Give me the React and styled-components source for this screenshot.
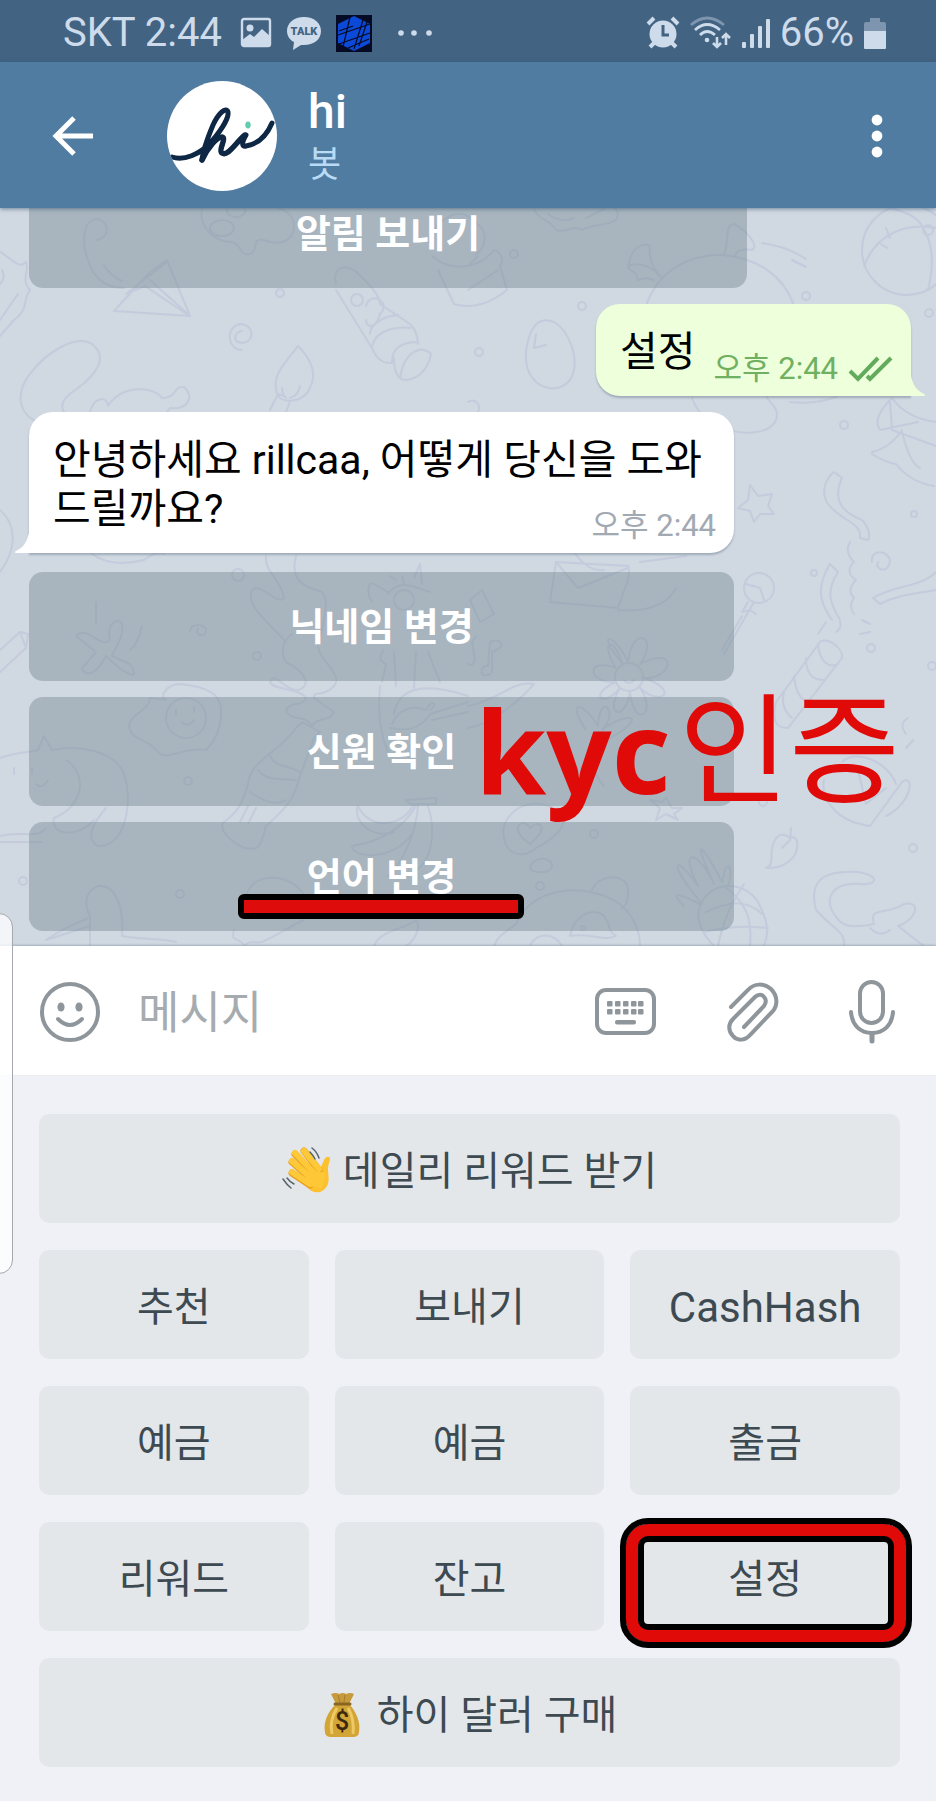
import React from 'react';
import styled, { createGlobalStyle } from 'styled-components';

const GlobalStyle = createGlobalStyle`
    * {
        box-sizing: border-box;
    }
    body {
        margin: 0;
        font-family: Roboto, "Noto Sans CJK KR", sans-serif;
    }
    button, input {
        font-family: inherit;
        border: none;
        padding: 0;
        background: none;
    }
    button {
        cursor: pointer;
    }
    svg {
        display: block;
        flex-shrink: 0;
    }
`;

const Page = styled.div`
    position: relative;
    height: 100vh;
    display: flex;
    flex-direction: column;
    overflow: hidden;
    background-color: #eff1f6;
`;

const StatusBar = styled.div`
    height: 62px;
    padding: 4px 50px 0 63px;
    display: flex;
    align-items: center;
    justify-content: space-between;
    flex-shrink: 0;
    background-color: #426382;
    color: #cddbeb;
    font-size: 40px;
    line-height: 46px;
`;

const StatusGroup = styled.div`
    display: flex;
    align-items: center;
    gap: ${props => props.$gap}px;
`;

const Header = styled.header`
    position: relative;
    z-index: 2;
    height: 146px;
    padding: 1px 48px 0 50px;
    display: flex;
    align-items: center;
    flex-shrink: 0;
    background-color: #507ca2;
    box-shadow: 0 1px 4px rgba(50, 80, 110, 0.6);
`;

const Avatar = styled.div`
    width: 110px;
    height: 110px;
    margin: 0 31px 0 73px;
    border-radius: 50%;
    overflow: hidden;
    flex-shrink: 0;
    background-color: white;
`;

const Peer = styled.div`
    flex: 1;
`;

const Name = styled.h1`
    margin: 0;
    color: white;
    font-size: 48px;
    font-weight: 500;
    line-height: 58px;
`;

const Status = styled.p`
    margin: 0;
    color: #b9dbf5;
    font-size: 36px;
    line-height: 48px;
`;

const Chat = styled.main`
    position: relative;
    flex: 1;
    min-height: 0;
    padding: 0 25px 15px 29px;
    display: flex;
    flex-direction: column;
    justify-content: flex-end;
    overflow: hidden;
    background-color: #d0d8e1;
`;

const Wallpaper = styled.svg`
    position: absolute;
    inset: 0;
    width: 100%;
    height: 100%;
    fill: none;
    stroke: #c4cbdc;
    stroke-width: 2;
    stroke-linecap: round;
    stroke-linejoin: round;
`;

const Keys = styled.div`
    position: relative;
    max-width: ${props => props.$width}px;
    display: flex;
    flex-direction: column;
    gap: 16px;
    flex-shrink: 0;
`;

const KeyRow = styled.div`
    position: relative;
    display: flex;
`;

const InlineKey = styled.button`
    flex: 1;
    height: 109px;
    padding-top: 1px;
    border-radius: 14px;
    background-color: rgba(108, 130, 140, 0.4);
    color: white;
    font-size: 38px;
    font-weight: 700;
    line-height: 49px;
`;

const Bubble = styled.div`
    position: relative;
    flex-shrink: 0;
    padding: 24px 18px 12px 24px;
    font-size: 41px;
    line-height: 49px;
    color: black;
    box-shadow: 0 2px 2px rgba(90, 110, 130, 0.4);
`;

const OutBubble = styled(Bubble)`
    align-self: flex-end;
    display: flex;
    margin: 16px 0;
    border-radius: 24px 24px 0 24px;
    background-color: #eeffdc;
`;

const InBubble = styled(Bubble)`
    display: flow-root;
    max-width: 705px;
    margin-bottom: 19px;
    border-radius: 24px 24px 24px 0;
    background-color: white;
`;

const Tail = styled.svg`
    position: absolute;
    bottom: 0;
    ${props => props.$side}: -15px;
`;

const Time = styled.span`
    display: flex;
    align-items: center;
    gap: 10px;
    margin: 26px 0 0 18px;
    color: ${props => props.$out ? '#70b061' : '#a1a9b2'};
    font-size: 31px;
    line-height: 30px;
`;

const InTime = styled(Time)`
    float: right;
`;

const Note = styled.strong`
    position: absolute;
    z-index: 1;
    left: 446px;
    top: 0;
    display: flex;
    align-items: baseline;
    gap: 8px;
    color: #e00a08;
    font-family: "Open Sans", sans-serif;
    font-size: 115px;
    line-height: 90px;
    white-space: nowrap;
    pointer-events: none;
`;

const NoteKorean = styled.span`
    font-family: "Noto Sans CJK KR", sans-serif;
    font-size: 120px;
    font-weight: 400;
`;

const Underline = styled.span`
    position: absolute;
    left: 209px;
    top: 72px;
    width: 286px;
    height: 25px;
    border: 6px solid black;
    border-radius: 6px;
    background-color: #de0c0a;
`;

const Composer = styled.form`
    height: 129px;
    padding: 3px 41px 0 40px;
    display: flex;
    align-items: center;
    gap: 70px;
    flex-shrink: 0;
    position: relative;
    background-color: white;
    box-shadow: 0 -1px 2px rgba(90, 110, 130, 0.4);
`;

const MessageInput = styled.input`
    flex: 1;
    min-width: 0;
    margin-left: -32px;
    padding-top: 4px;
    outline: none;
    font-size: 45px;
    line-height: 56px;
    color: black;
    &::placeholder {
        color: #a6abaf;
        opacity: 1;
    }
`;

const Keyboard = styled.section`
    padding: 39px 36px 34px 39px;
    display: grid;
    grid-template-columns: repeat(3, 1fr);
    gap: 27px 26px;
    flex-shrink: 0;
`;

const ReplyKey = styled.button`
    position: relative;
    grid-column: ${props => props.$wide ? '1 / -1' : 'auto'};
    height: 109px;
    padding-top: 5px;
    display: flex;
    align-items: center;
    justify-content: center;
    gap: 11px;
    border-radius: 10px;
    background-color: #e3e7ea;
    color: #3e4a51;
    font-size: ${props => props.$latin ? 42 : 40}px;
    line-height: 49px;
`;

const Frame = styled.span`
    position: absolute;
    left: -10px;
    right: -12px;
    top: -4px;
    height: 130px;
    border: 6px solid black;
    border-radius: 28px;
    box-shadow: inset 0 0 0 12px #e00a08, inset 0 0 0 18px black;
`;

const EdgePanel = styled.div`
    position: absolute;
    z-index: 3;
    left: -2px;
    top: 913px;
    width: 15px;
    height: 361px;
    border: 1px solid #a4a7ab;
    border-radius: 0 14px 14px 0;
    background-color: rgba(255, 255, 255, 0.75);
`;

const GalleryIcon = () => (
    <svg width="32" height="32" viewBox="0 0 32 32" fill="none">
        <rect x="2" y="2" width="28" height="27" rx="2" stroke="#cddbeb" strokeWidth="2.4" />
        <circle cx="10" cy="11" r="3.5" fill="#cddbeb" />
        <path d="M2 23 L10 17 L14 20 L22 12 L30 19 V29 H2 Z" fill="#cddbeb" />
    </svg>
);

const TalkIcon = () => (
    <svg width="36" height="36" viewBox="0 0 36 36">
        <path d="M18 2 C8 2 1 8 1 16 C1 21 4 25 8 27 L7 35 L15 30 C27 31 35 25 35 16 C35 8 28 2 18 2 Z" fill="#cddbeb" />
        <text x="18" y="20" textAnchor="middle" fontFamily="Roboto, sans-serif" fontSize="11" fontWeight="900" fill="#426382">TALK</text>
    </svg>
);

const AppIcon = () => (
    <svg width="36" height="37" viewBox="0 0 36 37">
        <rect width="36" height="37" fill="#050b25" />
        <path d="M18 1 L34 9 V28 L18 36 L2 28 V9 Z" fill="#0b49d8" />
        <path d="M14 2 L7 32 M27 5 L18 34 M31 7 L23 31 M2 20 L34 9 M3 29 L34 18 M3 16 L17 11 M12 33 L33 24" stroke="#050b25" strokeWidth="1.2" />
    </svg>
);

const MoreIcon = () => (
    <svg width="42" height="8" viewBox="-8 0 42 8" fill="#cddbeb">
        <circle cx="3" cy="4" r="2.8" />
        <circle cx="16" cy="4" r="2.8" />
        <circle cx="31" cy="4" r="2.8" />
    </svg>
);

const AlarmIcon = () => (
    <svg width="34" height="34" viewBox="0 0 34 34" fill="none" stroke="#cddbeb" strokeLinecap="butt">
        <path d="M2 8 L8 2 M26 2 L32 8" strokeWidth="4" />
        <path d="M4 31 L9 26 M30 31 L25 26" strokeWidth="4" />
        <circle cx="17" cy="18" r="13.5" fill="#cddbeb" stroke="none" />
        <path d="M17 9 V19 H23" stroke="#426382" strokeWidth="3" />
    </svg>
);

const WifiIcon = () => (
    <svg width="42" height="34" viewBox="0 0 42 34" fill="none" stroke="#cddbeb" strokeWidth="2.8">
        <path d="M1 9 Q17 -5 34 9" stroke="#7d95ae" />
        <path d="M5 14 Q17 3 30 14" />
        <path d="M10 19 Q17 12 25 19" />
        <circle cx="17" cy="24" r="2.3" fill="#cddbeb" stroke="none" />
        <path d="M27 21 V30 M23 27 L27 31 L31 27 M36 29 V19 M32 22 L36 18 L40 22" strokeWidth="2.6" />
    </svg>
);

const SignalIcon = () => (
    <svg width="28" height="32" viewBox="0 0 28 32" fill="#cddbeb">
        <rect x="0" y="25" width="4" height="6" rx="1" />
        <rect x="8" y="17" width="4" height="14" rx="1" />
        <rect x="16" y="9" width="4" height="22" rx="1" />
        <rect x="24" y="2" width="4" height="29" rx="1" />
    </svg>
);

const BatteryIcon = () => (
    <svg width="22" height="32" viewBox="0 0 22 32">
        <path d="M6 1 H16 V5 H20 Q22 5 22 7 V15 H0 V7 Q0 5 2 5 H6 Z" fill="#7d95ae" />
        <path d="M0 14 H22 V31 Q22 32 21 32 H1 Q0 32 0 31 Z" fill="#cddbeb" />
    </svg>
);

const BackIcon = () => (
    <svg width="44" height="44" viewBox="0 0 44 44" fill="none" stroke="white" strokeWidth="5">
        <path d="M43 22 H6 M24 4 L6 22 L24 40" />
    </svg>
);

const DotsIcon = () => (
    <svg width="22" height="44" viewBox="0 0 22 44" fill="white">
        <circle cx="11" cy="6" r="5.4" />
        <circle cx="11" cy="22" r="5.4" />
        <circle cx="11" cy="38" r="5.4" />
    </svg>
);

const HiLogo = () => (
    <svg width="110" height="110" viewBox="0 0 110 110" fill="none" stroke="#0d2744" strokeLinecap="round" strokeLinejoin="round">
        <path d="M5 76 C16 80 33 74 45 60 C56 47 62 36 61 31 C59 25 51 33 46 44 C41 56 36 69 35 79" strokeWidth="5" />
        <path d="M35 79 C41 66 50 56 55 56 C60 57 51 69 55 72 C61 76 69 61 78 54" strokeWidth="5.4" />
        <path d="M79 54 C75 61 74 66 79 65 C91 63 100 54 105 42" strokeWidth="5" />
        <ellipse cx="81" cy="44" rx="2.7" ry="3.4" fill="#5fcdb0" stroke="none" />
    </svg>
);

const ChecksIcon = () => (
    <svg width="45" height="26" viewBox="0 0 45 26" fill="none" stroke="#62aa5c" strokeWidth="4">
        <path d="M2 15 L10 23 L30 2 M19 20 L22 23 L43 2" />
    </svg>
);

const SmileIcon = () => (
    <svg width="60" height="60" viewBox="0 0 60 60" fill="none" stroke="#8f969b" strokeWidth="4">
        <circle cx="30" cy="30" r="28" />
        <ellipse cx="21" cy="25" rx="3.6" ry="4.6" fill="#8f969b" stroke="none" />
        <ellipse cx="39" cy="25" rx="3.6" ry="4.6" fill="#8f969b" stroke="none" />
        <path d="M18 37 Q30 49 42 37" strokeLinecap="round" />
    </svg>
);

const KeyboardIcon = () => (
    <svg width="62" height="48" viewBox="0 0 62 48" fill="#8f969b">
        <rect x="2" y="2" width="57" height="43" rx="9" fill="none" stroke="#8f969b" strokeWidth="4" />
        {[12, 20, 28, 36, 43].map(x => (
            <React.Fragment key={x}>
                <rect x={x} y="13" width="5.5" height="5.5" rx="1" />
                <rect x={x} y="21" width="5.5" height="5.5" rx="1" />
            </React.Fragment>
        ))}
        <rect x="20" y="32" width="21" height="4.6" rx="2" />
    </svg>
);

const ClipIcon = () => (
    <svg width="52" height="60" viewBox="0 0 52 60" fill="none" stroke="#8f969b" strokeWidth="4" strokeLinecap="round">
        <path d="M4 25 L21 8 C27 1 37 1 44 7 C51 14 51 24 45 30 L23 53 C18 59 10 59 6 54 C1 49 1 42 6 37 L28 15 C31 12 35 12 37 15 C40 18 39 21 37 24 L17 45" />
    </svg>
);

const MicIcon = () => (
    <svg width="46" height="64" viewBox="0 0 46 64" fill="none" stroke="#8f969b" strokeWidth="4" strokeLinecap="round">
        <rect x="11" y="2" width="23" height="41" rx="11.5" />
        <path d="M2 32 C3 45 11 53 23 53 C35 53 43 45 44 32" />
        <path d="M23 54 V61" strokeWidth="5" />
    </svg>
);

const WaveEmoji = () => (
    <svg width="50" height="50" viewBox="0 0 50 50" role="img" aria-label="손 흔들기" fill="none" strokeLinecap="round">
        <path d="M14 30 L26 42 C32 49 41 47 45 40 C48 35 46 29 46 23 C46 18 48 15 48 13 C48 10 44 10 42 14 L39 21 L36 24 Z" fill="#fdc02f" />
        <path d="M37 24 L22 5 M33 29 L13 8 M29 33 L10 16 M28 39 L10 27" stroke="#e9a021" strokeWidth="7" />
        <path d="M37 23 L22 5 M33 28 L13 7 M29 32 L10 15 M28 38 L10 26" stroke="#fec938" strokeWidth="6" />
        <path d="M30 25 L44 27 L40 43 L28 40 Z" fill="#fdc735" />
        <path d="M30 2 Q35 6 37 12 M28 6 Q31 9 33 13 M1 33 Q5 39 9 42 M5 32 Q8 36 12 38" stroke="#58646a" strokeWidth="1.5" />
    </svg>
);

const MoneyBagEmoji = () => (
    <svg width="44" height="46" viewBox="-1 0 44 46" role="img" aria-label="돈주머니">
        <path d="M8 2 Q13 0 16 2 Q20 0 23 2 Q27 0 31 2 L26 12 H13 Z" fill="#c79a3b" />
        <path d="M12 13 C5 20 0 30 2 40 C2 46 8 45 19 45 C30 45 36 46 36 40 C38 30 33 20 27 13 Z" fill="#d3a436" />
        <path d="M14 16 C9 24 7 33 9 42 M25 16 C30 24 31 32 30 42" stroke="#edca63" strokeWidth="3" fill="none" />
        <path d="M12 12 H27" stroke="#8a6521" strokeWidth="3" strokeLinecap="round" />
        <path d="M15 3 L17 10 M22 3 L21 10" stroke="#a67c2a" strokeWidth="1" />
        <text x="19" y="38" textAnchor="middle" fontFamily="Roboto, sans-serif" fontSize="25" fontWeight="500" fill="#3c2a10">$</text>
    </svg>
);

// faint doodles behind the conversation
const Doodles = () => (
    <Wallpaper viewBox="0 208 936 738" preserveAspectRatio="xMidYMin slice" aria-hidden="true">
        {/* palette, umbrella handle, paper plane */}
        <path d="M202 208 C198 228 216 242 232 242 C242 244 238 256 250 254 C260 250 250 238 264 240 C278 246 294 242 294 226 C294 216 286 210 278 208" />
        <ellipse cx="222" cy="228" rx="12" ry="8" />
        <ellipse cx="236" cy="211" rx="9" ry="6" />
        <path d="M96 240 C110 238 110 222 98 219 C86 218 82 234 85 250 C90 270 98 288 124 288 M104 265 Q110 276 122 281" />
        <path d="M114 311 L150 272 L167 260 L190 316 Z M150 280 L190 316 M126 294 L167 262 M130 292 L145 286 L188 315" />
        <circle cx="280" cy="293" r="4" />
        <path d="M0 252 C12 258 18 270 26 262 C30 272 20 280 30 290 C22 300 30 308 14 320 L0 336 M0 320 L18 294 M2 270 Q6 278 0 284" />
        {/* spiral, hot dog, brush */}
        <path d="M242 350 C228 350 224 328 240 324 C254 324 256 342 242 343 C232 342 234 332 242 331" />
        <path d="M52 424 C20 424 12 396 30 374 C46 352 76 334 92 344 C110 358 94 376 78 388 C62 398 60 406 64 412 M90 412 C94 396 108 396 108 406 C122 384 154 386 162 398 C178 398 172 386 184 387 C196 398 186 410 170 408 L164 416" />
        <path d="M298 346 C282 366 270 378 278 396 C284 404 304 402 310 388 C318 372 310 358 298 346 Z M284 396 L278 394 L270 410 M290 402 L286 412 M300 386 Q298 396 290 398 M282 388 Q282 394 286 398" />
        <path d="M336 284 C332 268 344 264 354 270 C370 284 380 296 380 304 L410 324 C418 332 418 342 418 344 M336 290 L372 348 C376 358 384 366 394 362 M370 334 C370 324 384 316 398 315 M372 346 C376 330 396 326 410 328 M392 362 C392 346 404 342 418 342 M394 358 C394 376 400 384 414 378 C424 374 430 362 431 354 C420 344 404 352 400 378" />
        <circle cx="357" cy="300" r="6" />
        <path d="M366 306 C370 290 392 302 380 314 C376 330 366 328 366 320" />
        {/* cupcake and cake */}
        <path d="M428 242 C436 218 462 204 474 222 C490 230 486 248 476 254 M432 256 C450 272 478 270 494 250 C502 252 504 262 500 266 L507 290 C492 302 474 310 454 304 L438 270 M468 290 L498 270 M470 264 L478 256" />
        <path d="M534 208 C538 222 548 216 556 230 C566 234 572 224 582 230 C594 224 606 226 616 220 C620 214 616 208 614 208 M548 214 C556 220 566 222 574 218 M586 218 L604 209" />
        <circle cx="514" cy="254" r="4" />
        {/* unicorn, ball, egg */}
        <path d="M646 306 C658 270 690 254 722 255 C758 258 784 276 794 306 M660 276 C648 262 630 262 628 268 C630 248 642 242 650 246 C648 260 654 270 662 278 M628 268 L636 274 L638 280 L646 278 L654 280 M724 254 C730 238 724 226 734 224 C746 230 760 246 752 250 C742 248 734 252 736 256 M762 243 Q786 246 806 259 M792 260 L806 267" />
        <circle cx="806" cy="296" r="4" />
        <circle cx="907" cy="250" r="45" />
        <path d="M864 266 C876 234 906 222 936 228 M890 208 Q916 214 922 226 Q938 250 928 290 M886 228 L890 238 M881 244 L887 248" />
        <circle cx="928" cy="230" r="5" />
        <path d="M542 321 C530 324 522 352 528 370 C536 390 558 394 570 380 C582 360 568 330 554 322 Q546 319 542 321 Z M536 334 L534 348 L546 345" />
        <circle cx="582" cy="306" r="4" />
        <circle cx="479" cy="352" r="4" />
        <circle cx="929" cy="313" r="4" />
        <circle cx="844" cy="425" r="4" />
        {/* fish tail, hamster, cocktail */}
        <path d="M692 398 C700 420 716 424 724 420 M716 424 C740 438 770 434 776 420 C780 408 770 404 766 396 M790 402 C810 404 824 402 838 396 M468 402 C474 398 482 404 478 412" />
        <path d="M892 398 Q906 418 936 422 M892 398 C880 410 874 422 880 430 L918 422 M890 402 L892 430 L936 446 M872 452 Q890 448 902 430 M872 454 Q884 462 896 464 Q910 482 934 486 M902 432 Q910 464 920 468" />
        {/* ribbons, star, lollipop */}
        <path d="M834 472 L842 478 C832 500 842 512 862 520 C870 528 870 538 868 540 L860 538 C862 522 842 522 828 504 C820 492 826 478 834 472 Z" />
        <path d="M750 485 L758 496 L772 494 L768 506 L774 514 L760 514 L754 522 L750 511 L738 508 L748 500 Z" />
        <path d="M850 542 Q844 552 854 562 Q844 572 856 580 Q846 590 854 598 Q848 606 854 614 M830 564 L838 572 C824 594 832 606 840 620 M830 564 C814 590 822 606 832 620 M872 562 C870 548 890 550 890 562 C888 574 874 570 878 562 M936 572 C920 588 896 584 873 598 L880 604 C900 594 916 594 936 590" />
        <circle cx="759" cy="588" r="15" />
        <path d="M746 584 L760 588 L764 600 M754 602 L724 654 M748 602 L742 612 L750 610 L756 614 M742 616 L722 650" />
        <circle cx="814" cy="573" r="3" />
        <circle cx="914" cy="514" r="3" />
        <path d="M556 562 L628 566 Q630 568 628 580 L618 608 L550 602 Z M556 562 L578 588 L628 568 M574 552 Q588 572 604 570 M618 610 C640 612 666 608 676 588 M640 562 L686 556 M92 554 Q112 568 144 560 Q158 550 164 554" />
        {/* left side: pencil, plane, egg, walrus */}
        <path d="M0 510 C16 524 18 548 0 572 M0 650 L20 632 L26 648 L0 672 M20 632 L28 634 L26 648 M76 636 C86 624 102 650 110 640 C106 624 118 616 122 624 C124 640 114 648 112 656 L130 664 C142 682 126 676 106 656 C94 680 82 674 82 668 L96 652 Z M96 602 V624 M142 626 Q138 644 130 650" />
        <path d="M190 632 C190 622 206 624 206 630 C206 638 194 636 198 628" />
        <path d="M166 700 C158 696 168 684 180 684 C202 686 220 692 221 708 C222 728 214 742 206 750 C184 746 166 762 158 752 C148 738 132 742 129 726 C130 714 150 710 150 698 Z" />
        <circle cx="186" cy="718" r="20" />
        <path d="M176 710 V715 M194 707 V712 M182 722 Q188 728 194 720" />
        <path d="M0 758 C16 752 32 752 38 750 L44 736 L52 750 C80 744 116 752 124 774 C134 804 124 848 98 846 C84 838 94 822 106 808 M66 760 C88 774 84 806 54 818 C50 836 78 838 94 820 M0 836 C24 830 36 840 46 828 M0 842 H42 M14 768 V774 M32 768 V774 M36 784 Q42 790 48 780" />
        <circle cx="188" cy="781" r="4" />
        <circle cx="257" cy="656" r="4" />
        <circle cx="238" cy="575" r="6" />
        {/* bottle spray and genie smoke */}
        <path d="M266 556 C264 572 282 580 284 598 C276 606 262 582 252 590 C246 606 264 618 284 640 M296 556 C290 580 302 586 322 592 C330 602 324 620 318 646 C318 660 344 674 334 686 C324 698 312 690 314 698 L334 712 C330 722 318 716 312 726 C306 714 290 722 286 710 C292 700 302 708 306 698 C300 688 272 690 270 682 C276 670 282 690 298 690 C312 686 306 672 286 662 C278 650 286 638 292 634" />
        <path d="M296 728 L302 722 L320 732 L314 738 L300 776 C294 800 286 808 266 826 C260 850 258 850 244 848 C228 840 218 828 224 822 C238 812 242 804 248 784 C250 760 280 752 296 728 Z M270 756 C276 768 286 764 300 772 M258 770 C268 782 280 778 296 780 M250 792 C264 802 276 806 286 800 M248 806 L240 822 M256 808 L248 824" />
        {/* giraffe, notes, watch */}
        <path d="M372 602 C366 592 368 580 374 584 L388 592 M390 576 L396 580 M404 584 L402 576 M414 578 L420 564 L422 584 M388 594 C400 576 420 590 430 592 M384 650 Q376 660 386 664 L382 682 M394 652 L396 686 M416 652 L414 688 M428 652 L436 672 L440 682 M380 686 Q376 728 390 756" />
        <circle cx="404" cy="600" r="10" />
        <path d="M470 600 L482 590 L494 614 L480 622 Z M468 664 C478 668 474 654 472 642 L476 636 M490 674 C478 680 480 664 488 666 L490 642 C500 638 504 644 500 648 L492 652 V672" />
        <path d="M392 724 C400 706 416 706 426 710 M390 728 Q418 734 430 714 L468 702 M432 720 L468 712 M430 710 C440 702 430 700 426 710 M394 714 C398 690 420 680 468 696 M468 728 C492 724 520 700 534 684 C512 680 500 700 468 706" />
        {/* daisy */}
        <circle cx="629" cy="677" r="14" />
        <path d="M622 663 C594 630 614 632 628 662 C632 624 660 636 640 664 C680 644 672 680 644 678 C680 690 662 708 640 688 C658 714 634 730 630 692 C624 724 604 714 620 688 C602 710 588 694 616 682 C586 684 586 656 616 668 C600 644 612 632 622 663 M624 680 Q629 686 634 680" />
        {/* plant, star, bubbles */}
        <path d="M586 730 C566 700 582 700 598 726 M598 726 C600 690 620 712 602 730 M602 730 C628 710 650 716 610 738 M600 734 C590 760 590 770 604 786" />
        <path d="M666 798 L672 808 L682 808 L674 814 L678 820 L666 814 L656 820 L660 808 L650 800 L662 802 Z" />
        <path d="M504 826 C512 802 544 796 560 814 C572 826 548 842 536 848 C520 862 500 852 504 826 Z M530 844 C506 828 524 816 530 828 C540 818 550 828 530 844 Z M530 868 C532 856 552 856 552 866 C552 874 532 874 530 868" />
        <circle cx="540" cy="886" r="4" />
        <circle cx="594" cy="834" r="4" />
        {/* flower, banana, pelican */}
        <path d="M406 800 L436 798 V804 L410 804 Z M414 804 C404 826 370 832 358 806 C352 820 372 840 394 832 M416 806 C402 830 378 842 352 846 C352 858 392 862 412 834 M428 806 C440 842 426 884 388 876 C402 864 416 834 418 806" />
        <path d="M90 946 V916 C82 900 88 890 98 886 C116 884 124 908 122 936 C146 940 160 938 176 942 M88 918 L62 930 L46 940 L90 926 M244 902 C248 882 262 876 278 878 C296 882 310 894 304 910 M234 930 C230 944 240 936 244 946 C250 938 258 946 266 940 C280 934 290 926 304 920 M374 946 C380 930 404 930 416 920 C422 926 414 942 406 946" />
        <circle cx="180" cy="894" r="4" />
        <circle cx="23" cy="881" r="4" />
        {/* panda */}
        <path d="M494 946 C498 934 510 930 516 924 C530 888 584 880 620 904 C638 920 640 936 640 946 M592 890 C600 872 628 874 628 890 C628 902 626 906 622 908 M570 936 C574 916 590 908 602 914 C612 924 606 930 616 936 C606 942 588 932 570 936 M530 946 C536 932 554 932 562 946" />
        <circle cx="583" cy="928" r="2" />
        {/* pineapple */}
        <path d="M702 904 C664 858 676 854 698 886 C678 846 698 850 714 884 C690 832 702 844 722 882 C728 850 734 874 728 886 M700 904 C680 894 668 890 684 906 M700 906 C710 880 744 880 758 902 C770 924 768 936 764 946 M700 906 C694 920 704 936 714 946 M706 912 C730 900 748 900 762 914 M704 932 C730 926 748 926 768 928 M724 886 C748 904 752 920 750 946 M744 884 C728 908 722 926 718 946" />
        {/* leaf, firework, cup, cat */}
        <path d="M766 868 C776 864 768 854 774 842 C778 832 786 834 790 838 C800 834 798 850 794 856 C786 866 778 868 766 868 Z M791 828 L790 840 L782 848" />
        <path d="M820 642 C826 636 844 648 842 658 L788 728 C774 728 772 718 776 702 Z M818 644 C820 664 830 668 838 664 M806 658 C806 676 814 680 824 680 M794 676 C796 696 804 702 808 700 M784 692 Q780 708 792 718 M818 634 L826 622 M836 632 Q842 628 840 622 M860 634 L870 632 M862 620 L870 624" />
        <path d="M906 734 Q898 724 908 718 M910 744 Q918 734 906 748" />
        <path d="M824 780 C820 800 838 822 870 826 L902 782 C914 772 914 802 886 816 M858 770 L866 804 L886 788 M842 762 C856 748 888 762 896 784" />
        <path d="M844 946 C846 932 834 930 816 910 C808 880 824 870 858 872 C882 876 876 886 860 884 C832 882 824 898 834 914 C842 928 852 928 874 924 C868 906 886 916 904 904 C924 900 914 922 898 926 C906 932 918 942 924 946 M870 928 Q880 938 890 930" />
        <circle cx="763" cy="802" r="4" />
        <circle cx="913" cy="848" r="4" />
        <circle cx="932" cy="666" r="4" />
        <circle cx="871" cy="648" r="4" />
    </Wallpaper>
);

const replyKeys = [
    { label: '데일리 리워드 받기', wide: true, icon: <WaveEmoji /> },
    { label: '추천' },
    { label: '보내기' },
    { label: 'CashHash', latin: true },
    { label: '예금' },
    { label: '예금' },
    { label: '출금' },
    { label: '리워드' },
    { label: '잔고' },
    { label: '설정', framed: true },
    { label: '하이 달러 구매', wide: true, icon: <MoneyBagEmoji /> },
];

const App = () => {
  return (
    <Page>
        <GlobalStyle />
        <StatusBar>
            <StatusGroup $gap={18}>
                <span>SKT 2:44</span>
                <StatusGroup $gap={14}>
                    <GalleryIcon />
                    <TalkIcon />
                    <AppIcon />
                </StatusGroup>
                <MoreIcon />
            </StatusGroup>
            <StatusGroup $gap={10}>
                <AlarmIcon />
                <WifiIcon />
                <SignalIcon />
                <span>66%</span>
                <BatteryIcon />
            </StatusGroup>
        </StatusBar>
        <Header>
            <button type="button" aria-label="뒤로"><BackIcon /></button>
            <Avatar><HiLogo /></Avatar>
            <Peer>
                <Name>hi</Name>
                <Status>봇</Status>
            </Peer>
            <button type="button" aria-label="메뉴"><DotsIcon /></button>
        </Header>
        <Chat>
            <Doodles />
            <Keys $width={718}>
                <KeyRow><InlineKey type="button">알림 보내기</InlineKey></KeyRow>
            </Keys>
            <OutBubble>
                설정
                <Time $out>오후 2:44 <ChecksIcon /></Time>
                <Tail $side="right" width="16" height="28" viewBox="0 0 16 28">
                    <path d="M0 0 C1 14 5 22 14 26 Q17 28 13 28 H0 Z" fill="#eeffdc" />
                </Tail>
            </OutBubble>
            <InBubble>
                안녕하세요 rillcaa, 어떻게 당신을 도와드릴까요?
                <InTime>오후 2:44</InTime>
                <Tail $side="left" width="16" height="28" viewBox="0 0 16 28">
                    <path d="M16 0 C15 14 11 22 2 26 Q-1 28 3 28 H16 Z" fill="white" />
                </Tail>
            </InBubble>
            <Keys $width={705}>
                <KeyRow><InlineKey type="button">닉네임 변경</InlineKey></KeyRow>
                <KeyRow>
                    <InlineKey type="button">신원 확인</InlineKey>
                    <Note>kyc<NoteKorean>인증</NoteKorean></Note>
                </KeyRow>
                <KeyRow>
                    <InlineKey type="button">언어 변경</InlineKey>
                    <Underline />
                </KeyRow>
            </Keys>
        </Chat>
        <Composer onSubmit={e => e.preventDefault()}>
            <button type="button" aria-label="이모티콘"><SmileIcon /></button>
            <MessageInput type="text" placeholder="메시지" aria-label="메시지" />
            <button type="button" aria-label="키보드"><KeyboardIcon /></button>
            <button type="button" aria-label="첨부"><ClipIcon /></button>
            <button type="button" aria-label="음성 메시지"><MicIcon /></button>
        </Composer>
        <Keyboard>
            {replyKeys.map((key, i) => (
                <ReplyKey type="button" key={i} $wide={key.wide} $latin={key.latin}>
                    {key.icon}
                    {key.label}
                    {key.framed && <Frame />}
                </ReplyKey>
            ))}
        </Keyboard>
        <EdgePanel />
    </Page>
  )
}

export default App;
